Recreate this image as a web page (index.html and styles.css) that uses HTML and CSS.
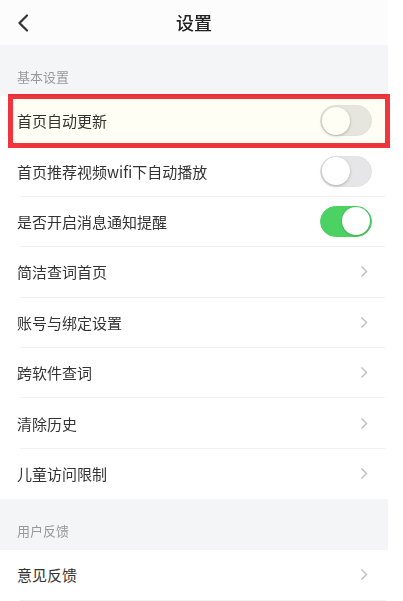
FILE: index.html
```html
<!DOCTYPE html>
<html lang="zh-CN">
<head>
<meta charset="utf-8">
<title>设置</title>
<link rel="stylesheet" href="styles.css">
</head>
<body>
<div class="app">
  <header class="header">
    <span class="back">
      <svg width="12" height="18" viewBox="0 0 12 18"><path d="M10 1.5 L2.5 9 L10 16.5" fill="none" stroke="#333" stroke-width="2.2" stroke-linecap="round" stroke-linejoin="round"/></svg>
    </span>
    <h1 class="title">设置</h1>
    <span></span>
  </header>

  <div class="section-label">基本设置</div>
  <div class="list">
    <div class="mark"></div>
    <div class="row"><span class="label">首页自动更新</span><span class="switch"><span class="knob"></span></span></div>
    <div class="row"><span class="label">首页推荐视频wifi下自动播放</span><span class="switch"><span class="knob"></span></span></div>
    <div class="row"><span class="label">是否开启消息通知提醒</span><span class="switch on"><span class="knob"></span></span></div>
    <div class="row nav"><span class="label">简洁查词首页</span><svg class="chev" width="8" height="13" viewBox="0 0 8 13"><path d="M1.5 1.5 L6.5 6.5 L1.5 11.5" fill="none" stroke="#bdbdbd" stroke-width="1.4"/></svg></div>
    <div class="row nav"><span class="label">账号与绑定设置</span><svg class="chev" width="8" height="13" viewBox="0 0 8 13"><path d="M1.5 1.5 L6.5 6.5 L1.5 11.5" fill="none" stroke="#bdbdbd" stroke-width="1.4"/></svg></div>
    <div class="row nav"><span class="label">跨软件查词</span><svg class="chev" width="8" height="13" viewBox="0 0 8 13"><path d="M1.5 1.5 L6.5 6.5 L1.5 11.5" fill="none" stroke="#bdbdbd" stroke-width="1.4"/></svg></div>
    <div class="row nav"><span class="label">清除历史</span><svg class="chev" width="8" height="13" viewBox="0 0 8 13"><path d="M1.5 1.5 L6.5 6.5 L1.5 11.5" fill="none" stroke="#bdbdbd" stroke-width="1.4"/></svg></div>
    <div class="row nav last"><span class="label">儿童访问限制</span><svg class="chev" width="8" height="13" viewBox="0 0 8 13"><path d="M1.5 1.5 L6.5 6.5 L1.5 11.5" fill="none" stroke="#bdbdbd" stroke-width="1.4"/></svg></div>
  </div>

  <div class="section-label">用户反馈</div>
  <div class="list">
    <div class="row nav"><span class="label">意见反馈</span><svg class="chev" width="8" height="13" viewBox="0 0 8 13"><path d="M1.5 1.5 L6.5 6.5 L1.5 11.5" fill="none" stroke="#bdbdbd" stroke-width="1.4"/></svg></div>
  </div>
</div>
</body>
</html>
```

FILE: styles.css
```css
html, body {
  margin: 0;
  padding: 0;
  background: #ffffff;
}
body {
  font-family: "Noto Sans CJK SC", "Noto Sans", sans-serif;
  color: #333;
  overflow: hidden;
}
.app {
  width: 388px;
  height: 601px;
  background: #f4f5f7;
}
.header {
  height: 45px;
  background: #fcfcfc;
  display: grid;
  grid-template-columns: 60px 1fr 60px;
  align-items: center;
}
.back {
  display: flex;
  align-items: center;
  padding-left: 17px;
  height: 45px;
}
.title {
  margin: 0;
  text-align: center;
  font-size: 18px;
  font-weight: 500;
  color: #222;
  line-height: 45px;
}
.section-label {
  height: 51px;
  box-sizing: border-box;
  padding: 23px 0 0 17px;
  font-size: 13px;
  line-height: 18px;
  color: #999;
}
.list {
  background: #fff;
  position: relative;
}
.mark {
  position: absolute;
  left: 8px;
  top: -2px;
  width: 382px;
  height: 54px;
  box-sizing: border-box;
  border: 5px solid #f2343c;
  background: #fffef4;
  mix-blend-mode: multiply;
  pointer-events: none;
}
.row {
  height: 50.4px;
  margin: 0 3px 0 20px;
  padding-right: 13px;
  box-sizing: border-box;
  border-bottom: 1px solid #f1f1f1;
  display: flex;
  align-items: center;
  justify-content: space-between;
}
.row.last {
  border-bottom: none;
}
.row.nav {
  padding-right: 17px;
}
.label {
  margin-left: -3px;
  font-size: 15px;
  color: #333;
}
.switch {
  width: 52px;
  height: 31px;
  border-radius: 16px;
  background: #e6e6e8;
  box-sizing: border-box;
  border: 1px solid #e2e2e4;
  display: flex;
  align-items: center;
  padding: 0 1px;
}
.knob {
  width: 28px;
  height: 28px;
  border-radius: 50%;
  background: #fff;
  box-shadow: 0 1px 3px rgba(0,0,0,0.25);
}
.switch.on {
  background: #4cd263;
  border-color: #4cd263;
  justify-content: flex-end;
}
.switch.on .knob {
  box-shadow: 0 0 0 1px rgba(0,0,0,0.06), 0 1px 2px rgba(0,0,0,0.15);
}
.chev {
  display: block;
}
```
